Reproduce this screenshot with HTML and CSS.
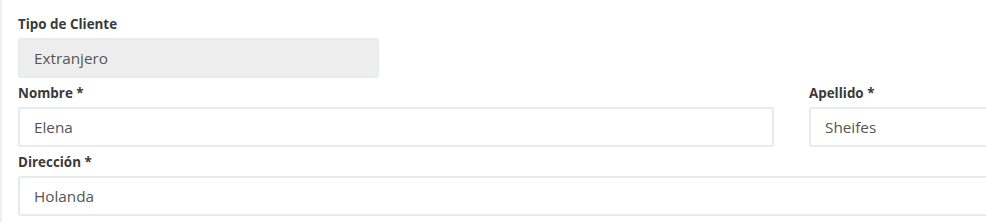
FILE: index.html
```html
<!DOCTYPE html>
<html lang="es">
<head>
  <meta charset="UTF-8">
  <title>Cliente</title>
  <link rel="stylesheet" href="styles.css">
</head>
<body>
  <div class="panel">
    <!-- Tipo de cliente -->
    <div class="form-group tipo">
      <label>Tipo de Cliente</label>
      <div class="form-control disabled">Extranjero</div>
    </div>

    <div class="row">
      <div class="form-group">
        <label>Nombre *</label>
        <div class="form-control">Elena</div>
      </div>
      <div class="form-group">
        <label>Apellido *</label>
        <div class="form-control">Sheifes</div>
      </div>
    </div>

    <div class="form-group">
      <label>Dirección *</label>
      <div class="form-control">Holanda</div>
    </div>
  </div>
</body>
</html>
```

FILE: styles.css
```css
body {
  margin: 0;
  background: #fff;
  font-family: 'Open Sans', sans-serif;
  color: #333;
}

.panel {
  border-left: 2px solid #eef0f2;
  padding: 16px 0 0 16px;
  min-height: 206px;
  overflow: hidden;
}

.form-group {
  margin-bottom: 7px;
}

.form-group label {
  display: block;
  font-size: 13.4px;
  font-weight: 700;
  line-height: 17px;
  margin-bottom: 5px;
  color: #3a3a3a;
}

.form-control {
  box-sizing: border-box;
  height: 40px;
  padding: 0 14px;
  border: 2px solid #e7ebef;
  border-radius: 3px;
  font-size: 15.3px;
  line-height: 36px;
  color: #555;
  background: #fff;
}

.form-control.disabled {
  background: #eee;
}

.tipo {
  width: 361px;
}

.row {
  display: grid;
  grid-template-columns: 756px 1fr;
  column-gap: 35px;
  margin-right: -20px;
}

.panel > .form-group:last-child {
  margin-right: -20px;
}
```
